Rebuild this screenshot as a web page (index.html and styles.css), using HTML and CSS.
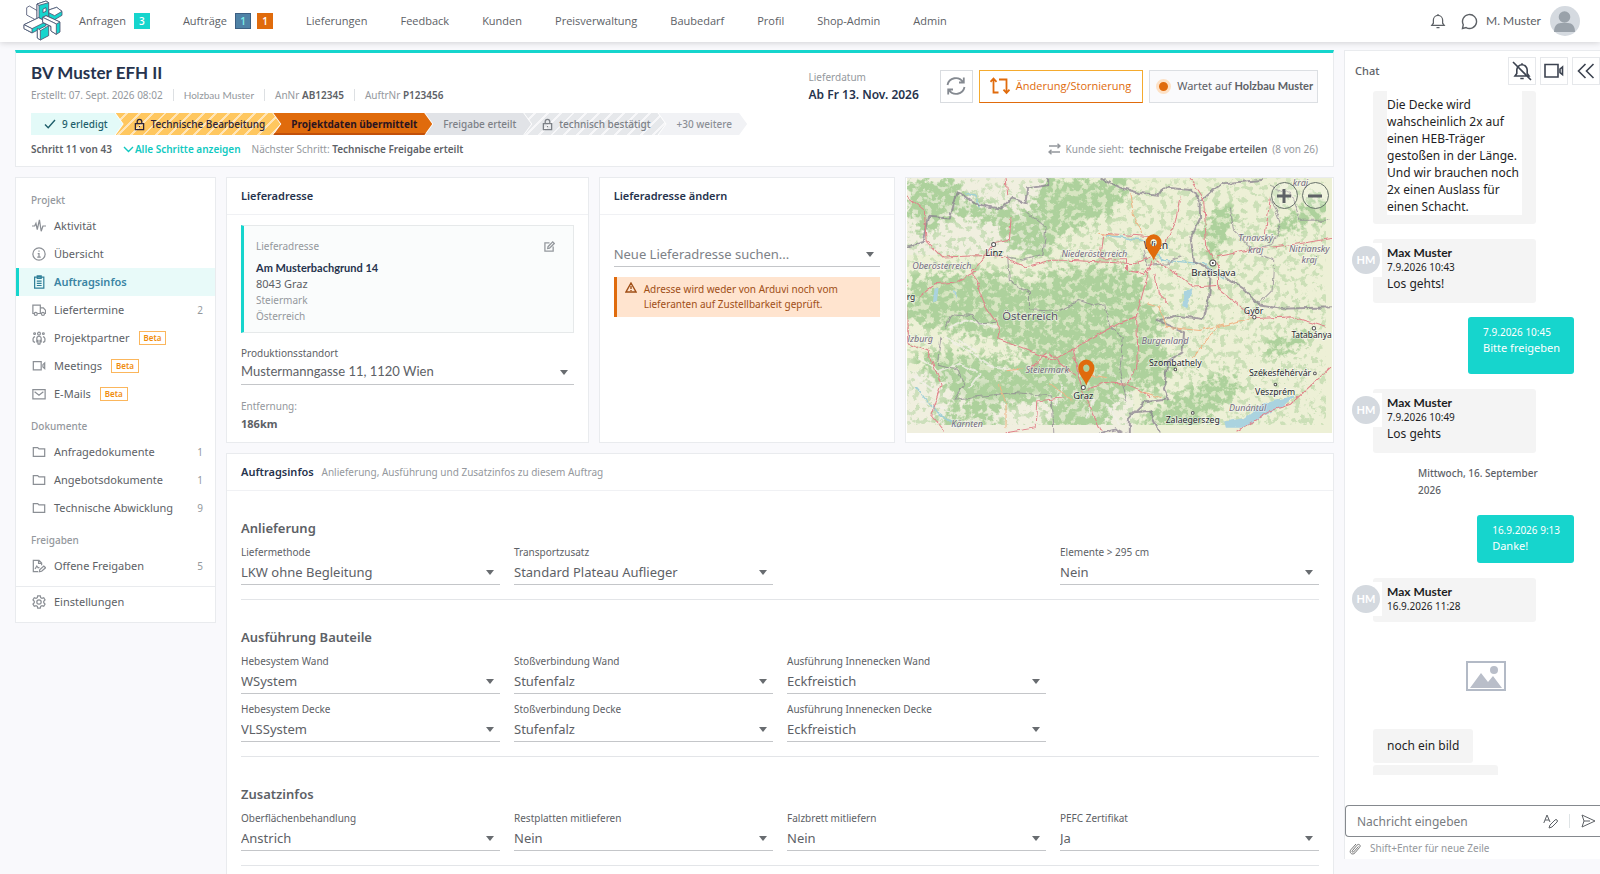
FILE: index.html
```html
<!DOCTYPE html>
<html lang="de">
<head>
<meta charset="utf-8">
<title>BV Muster EFH II</title>
<link rel="stylesheet" href="styles.css">
</head>
<body>
<svg class="defs" width="0" height="0" aria-hidden="true">
  <defs>
    <symbol id="i-folder" viewBox="0 0 16 16"><path d="M1.500 3.500V13h13V4.500H8L6.500 3h-5z"/></symbol>
    <symbol id="i-video" viewBox="0 0 16 16"><path d="M1.500 3h9v9.500h-9zM12.500 6.500l2-2v6.500l-2-2z"/></symbol>
    <symbol id="i-lock" viewBox="0 0 12 14"><path d="M1.500 6h9v6.500h-9zM3.500 6V3.800a2.500 2.500 0 0 1 5 0V6M6 8.500v1.500"/></symbol>
    <symbol id="i-bell" viewBox="0 0 18 18"><path d="M2 14h14l-1.800-2.500V8a5.200 5.200 0 0 0-10.400 0v3.500zM9 1.200v1.600M7.300 16.500h3.400"/></symbol>
  </defs>
</svg>

<header class="topbar">
  <a class="logo" href="#" aria-label="Startseite">
    <svg viewBox="0 0 138 126" width="46" height="42">
      <g stroke="#4d5672" stroke-width="2.500" stroke-linejoin="round" fill="#fff">
        <path d="M20 23l8-5 34 20v22l-7 4-35-19z"/>
        <path d="M86 30l24-8 16 12v12l-24 14-16-8z" fill="#16d5cd"/>
        <path d="M86 30l24-8 16 12-22 13-18-9z"/>
        <path d="M51 12l27-9 8 5v42l-24 12-11-8z" fill="#16d5cd"/>
        <path d="M51 12l6 4v46l-6-5z"/>
        <path d="M51 12l27-9 8 5-29 8z"/>
        <path d="M69 27l9-4v11l-9 4z"/>
        <path d="M12 74l44-21 22 12v12L36 99 12 86z" fill="#16d5cd"/>
        <path d="M12 74l44-21 22 12-42 21z"/>
        <path d="M12 74l24 12v12L12 86z"/>
        <path d="M52 88l8 5 26-16v30l-25 13-9-6z" fill="#16d5cd"/>
        <path d="M52 85l9 5v30l-9-6z"/>
        <path d="M68 52l10-5 42 19v30l-11 7-16-10V80l-25-13z" fill="#16d5cd"/>
        <path d="M68 52l10-5 42 19-11 6z"/>
        <path d="M68 52l41 20v31l-16-10V79L68 67z"/>
      </g>
    </svg>
  </a>
  <nav class="mainnav">
    <a href="#">Anfragen <b class="count teal">3</b></a>
    <a href="#">Aufträge <b class="count blue">1</b><b class="count orange">1</b></a>
    <a href="#">Lieferungen</a>
    <a href="#">Feedback</a>
    <a href="#">Kunden</a>
    <a href="#">Preisverwaltung</a>
    <a href="#">Baubedarf</a>
    <a href="#">Profil</a>
    <a href="#">Shop-Admin</a>
    <a href="#">Admin</a>
  </nav>
  <div class="user">
    <button class="plain" aria-label="Benachrichtigungen"><svg class="ico" width="16" height="16"><use href="#i-bell"/></svg></button>
    <button class="plain" aria-label="Nachrichten"><svg class="ico" width="17" height="17" viewBox="0 0 17 17"><path d="M1.500 15.500l.8-3.800a7 7 0 1 1 2.800 2.900z"/></svg></button>
    <span class="username">M. Muster</span>
    <svg width="30" height="30" viewBox="0 0 30 30"><circle cx="15" cy="15" r="15" fill="#d5dae0"/><circle cx="14.500" cy="11" r="5.800" fill="#9aa2aa"/><path d="M4 26c0-6 3-9 7-9h7c4 0 7 3 7 9z" fill="#9aa2aa"/></svg>
  </div>
</header>

<div class="page">
  <div class="left">
    <section class="project">
      <div class="project-top">
        <div>
          <h1>BV Muster EFH II</h1>
          <p class="meta"><span>Erstellt: 07. Sept. 2026 08:02</span><i></i><span class="lato">Holzbau Muster</span><i></i><span>AnNr <b>AB12345</b></span><i></i><span>AuftrNr <b>P123456</b></span></p>
        </div>
        <div class="actions">
          <div class="date"><span>Lieferdatum</span><strong>Ab Fr 13. Nov. 2026</strong></div>
          <button class="sq" aria-label="Neu laden"><svg class="ico" width="20" height="20" viewBox="0 0 20 20"><path d="M1.500 9A8.500 8.500 0 0 1 17 6M18.500 11A8.500 8.500 0 0 1 3 14M17.800 1.500V6.500H13M2.200 18.500V13.500H7"/></svg></button>
          <button class="change"><svg class="ico" width="20" height="18" viewBox="0 0 20 18"><path d="M8.500 15.500h-5V2M.5 4.800L3.500 1.500l3 3.300M9 2.500h7.500v13M13.500 12.700l3 3.300 3-3.300"/></svg>Änderung/Stornierung</button>
          <div class="waiting"><span class="dot"></span><span>Wartet auf <b class="lato">Holzbau Muster</b></span></div>
        </div>
      </div>
      <ol class="steps">
        <li class="s-done"><svg class="ico" width="12" height="10" viewBox="0 0 12 10"><path d="M1 5.500l3.200 3.200L11 1"/></svg>9 erledigt</li>
        <li class="s-tech"><svg class="ico" width="11" height="13"><use href="#i-lock"/></svg>Technische Bearbeitung</li>
        <li class="s-now">Projektdaten übermittelt</li>
        <li class="s-next">Freigabe erteilt</li>
        <li class="s-lock"><svg class="ico" width="11" height="13"><use href="#i-lock"/></svg>technisch bestätigt</li>
        <li class="s-more">+30 weitere</li>
      </ol>
      <div class="stepinfo">
        <b>Schritt 11 von 43</b>
        <a href="#"><svg class="ico" width="11" height="7" viewBox="0 0 11 7"><path d="M1 1l4.500 4.500L10 1"/></svg>Alle Schritte anzeigen</a>
        <span>Nächster Schritt: <b>Technische Freigabe erteilt</b></span>
        <span class="sees"><svg class="ico" width="13" height="12" viewBox="0 0 13 12"><path d="M1 3h11M9.500 .7L12 3 9.500 5.300M12 9H1M3.500 6.700L1 9l2.500 2.300"/></svg>Kunde sieht: <b>technische Freigabe erteilen</b> (8 von 26)</span>
      </div>
    </section>

    <div class="columns">
      <nav class="side">
        <h2>Projekt</h2>
        <a href="#"><svg class="ico" width="14" height="14" viewBox="0 0 16 16"><path d="M0 8h3l1.500-3L6 12l2.500-11L10.500 14l2-6H16"/></svg>Aktivität</a>
        <a href="#"><svg class="ico" width="14" height="14" viewBox="0 0 16 16"><circle cx="8" cy="8" r="7"/><path d="M8 4v1.500M6.500 7.500H8V11.500M6 11.500h4"/></svg>Übersicht</a>
        <a href="#" class="active"><svg class="ico" width="14" height="14" viewBox="0 0 16 16"><path d="M3 2.500h10.500v12.500H3zM6 1h4.500v3H6zM5.500 7h5.500M5.500 9.500h5.500M5.500 12h5.500"/></svg>Auftragsinfos</a>
        <a href="#"><svg class="ico" width="14" height="14" viewBox="0 0 16 16"><path d="M2.500 12H1V2.500h8.500V12H6M9.500 5.500h3.500l2.500 3V12h-1M9.500 12h1"/><circle cx="4.300" cy="12.500" r="1.700"/><circle cx="12.500" cy="12.500" r="1.700"/></svg>Liefertermine<span class="num">2</span></a>
        <a href="#"><svg class="ico" width="14" height="14" viewBox="0 0 16 16"><circle cx="8" cy="3" r="1.600"/><circle cx="3" cy="3" r="1"/><circle cx="13" cy="3" r="1"/><path d="M5.500 13V8.500a2.500 2.500 0 0 1 5 0V13M6.800 15V10M9.200 15V10M6.500 15h3M3.500 6.500C1 7 .8 9.500 1.500 12l2 1M12.500 6.500c2.500.5 2.700 3 2 5.500l-2 1"/></svg>Projektpartner<em>Beta</em></a>
        <a href="#"><svg class="ico" width="14" height="14"><use href="#i-video"/></svg>Meetings<em>Beta</em></a>
        <a href="#"><svg class="ico" width="14" height="14" viewBox="0 0 16 16"><path d="M1 3h14v10.500H1zM3 5.500l5 4 5-4"/></svg>E-Mails<em>Beta</em></a>
        <h2>Dokumente</h2>
        <a href="#"><svg class="ico" width="14" height="14"><use href="#i-folder"/></svg>Anfragedokumente<span class="num">1</span></a>
        <a href="#"><svg class="ico" width="14" height="14"><use href="#i-folder"/></svg>Angebotsdokumente<span class="num">1</span></a>
        <a href="#"><svg class="ico" width="14" height="14"><use href="#i-folder"/></svg>Technische Abwicklung<span class="num">9</span></a>
        <h2>Freigaben</h2>
        <a href="#"><svg class="ico" width="14" height="14" viewBox="0 0 16 16"><path d="M7 14.500H1.500v-13H8l3 3V7M7.500 1.500V5H11M3.500 11.500l2-3.500 1.500 2 1.500-.5M8.500 14.500l.5-2.500 4.500-4 2 2-4.500 4z"/></svg>Offene Freigaben<span class="num">5</span></a>
        <hr>
        <a href="#"><svg class="ico" width="14" height="14" viewBox="0 0 16 16"><circle cx="8" cy="8" r="2.500"/><path d="M6.500 1h3l.4 2 1.500.9 2-.8 1.500 2.600-1.500 1.400v1.800l1.500 1.400-1.500 2.600-2-.8-1.500.9-.4 2h-3l-.4-2-1.500-.9-2 .8L1.100 10.300l1.500-1.400V7.100L1.100 5.700l1.500-2.600 2 .8 1.500-.9z"/></svg>Einstellungen</a>
      </nav>

      <main class="content">
        <div class="cards">
          <section class="card">
            <h2 class="cardhead">Lieferadresse</h2>
            <div class="cardbody">
              <div class="address">
                <div class="addrhead">Lieferadresse<button class="plain" aria-label="Bearbeiten"><svg class="ico" width="11" height="11" viewBox="0 0 12 12"><path d="M6 2H1v9h9V6M4 8.200l.4-2L9.500 1l1.700 1.700L6 7.800z"/></svg></button></div>
                <strong class="lato">Am Musterbachgrund 14</strong>
                <span class="dark">8043 Graz</span>
                <span>Steiermark</span>
                <span>Österreich</span>
              </div>
              <div class="field site">
                <label for="site">Produktionsstandort</label>
                <div class="sel"><select id="site" class="lato"><option>Mustermanngasse 11, 1120 Wien</option></select></div>
              </div>
              <dl class="distance"><dt>Entfernung:</dt><dd>186km</dd></dl>
            </div>
          </section>
          <section class="card">
            <h2 class="cardhead">Lieferadresse ändern</h2>
            <div class="cardbody search">
              <div class="sel"><input type="text" placeholder="Neue Lieferadresse suchen..." aria-label="Neue Lieferadresse suchen"></div>
              <div class="alert"><svg class="ico" width="12" height="11" viewBox="0 0 12 11"><path d="M6 1l5 9H1zM6 4v3M6 8v1"/></svg><p>Adresse wird weder von Arduvi noch vom Lieferanten auf Zustellbarkeit geprüft.</p></div>
            </div>
          </section>
          <section class="card mapcard">
            <div class="map">
              <svg viewBox="21 24 1275 762" preserveAspectRatio="xMidYMid slice">
                <defs>
                  <filter id="woods" x="0" y="0" width="100%" height="100%" filterUnits="userSpaceOnUse" color-interpolation-filters="sRGB">
                    <feTurbulence type="fractalNoise" baseFrequency=".05" numOctaves="5" seed="8" result="n"/>
                    <feColorMatrix in="n" type="matrix" values="0 0 0 0 0  0 0 0 0 0  0 0 0 0 0  4 0 0 0 -1.500" result="a"/>
                    <feGaussianBlur in="SourceGraphic" stdDeviation="14" result="b"/>
                    <feComposite in="b" in2="a" operator="arithmetic" k2="1.800" k3="1" k4="-.95" result="c"/>
                    <feColorMatrix in="c" type="matrix" values="0 0 0 0 .68  0 0 0 0 .82  0 0 0 0 .61  0 0 0 1.300 0"/>
                  </filter>
                  <filter id="rough" x="-5%" y="-5%" width="110%" height="110%"><feTurbulence type="fractalNoise" baseFrequency=".04" numOctaves="3" seed="3"/><feDisplacementMap in="SourceGraphic" scale="14" xChannelSelector="R" yChannelSelector="G"/></filter>
                </defs>
                <rect x="21" y="24" width="1275" height="762" fill="#edf0d6"/>
                <path d="M21 24h420v230H21zM21 600h680v186H21z" fill="#f1eee4" opacity=".6"/>
                <g filter="url(#woods)">
                  <rect x="21" y="24" width="1275" height="762" fill="#000" fill-opacity=".2"/>
                  <path d="M21 24h150l30 70 180 30 60-100h250l-40 100-150 60-60 80-90-20-60-80-130-30-90 60-50-60zM21 320l220-20 130 30 200-50 130 20 50 60-30 70-130 70-60 90-120-20-100-60-130-20-160-40zM540 500l160-40 130 110-50 90-120 10-50 116H440L460 660 340 700 180 690 40 560 180 540 320 570 460 560zM900 180l60-80 50 20-70 170zM640 450l80-50 70 30-20 90zM1100 180l190-120v80l-160 50zM1090 520l140-50-30 60-90 30zM700 780l80-80 200-100 50 40-150 140z" fill="#000" fill-opacity=".6"/>
                  <path d="M120 700h180v86H120zM200 640h260v50H220z" fill="#000" fill-opacity=".5"/>
                </g>
                <g filter="url(#rough)" fill="none" stroke-linecap="round">
                  <g stroke="#f3f0e8" stroke-width="6" opacity=".8"><path d="M140 500l80 50 60 40 70 10M60 560l60 40 60-20 50 20M50 620l70 50M60 690l90 30M180 510l50 30M240 610l-30 40M290 470l-90-20-50 20M470 700l20-60M560 740l20-50M620 700l40 60"/></g>
                  <g fill="#aad3df"><path d="M855 365l22-12-5 35-12 28-14-8zM972 752l60-10 60-45 95-25-40 35-70 35-50 28h-50zM106 355l12-4-4 40-12 5zM165 362h7l-2 24z"/></g>
                  <path d="M200 70l30 5 10 35M50 650l60 70 70 50M620 195l110 15 60 60 120 10 60 45" stroke="#9fcfd6" stroke-width="4"/>
                  <g stroke="#857b8b" stroke-width="6" opacity=".7"><path d="M21 230l50-15 15-75 65 5 25-80 50 35 40 10 40 5 30-30 45 15 5-45 60-10V24M605 24l60 30 55 15 55 5 15-22 80 8 28 25 2 60-28 60 10 70 50 25-5 80-20 65-80-10-50 15 75 35-5 60-45 30-10 80 15 30-75 10-45 45v55l-40-20-50 15M690 725l60-5 30 66M905 90l60-50 60-5 60-5M960 310l70 45 50 50 60 10 160-5"/></g>
                  <g stroke="#8d8392" stroke-width="3" opacity=".7"><path d="M380 125l60 45-10 85-60 15-45-10 5 70 60 40v45l90 5 60-30 45 15 30-5 15 70 40 30-10 100 20 90M140 470l20-40 60 5 20 25 50-5M125 500l-10 80 60 15 20 50-30 40 180-20 110 10 5 116M730 240l10 45 60-5 40-20M990 110l10 70 60 60 60-20 20-60-30-80M1070 250l50 20-5 90-40 40M1110 50l60 20 30 80 90 0"/></g>
                  <g stroke="#e2828a" stroke-width="3"><path d="M21 75l55 45 5 90 50 50 150-5 45 10 50 25 80-20h50l100 5 100 5 45-20M320 24l5 50M335 145l-5 65-45 10-45 60-20 20 20 60 20 50 40 60-5 35 170 65 60-40 110-60 75-35 25-90 10-40 10-30M440 550l-50 45M450 550l75 60M520 530l15 80 10 40 60 130M565 655l50-20 65 5 35 15 40 25M500 680l-85 10-5 80-90 15M620 190l150 10M610 190l-10 75 80 0 0 35 50 10 30-30M760 265l70 45 50 40 70-5M840 80l-15 80-30 60M870 24l40 60 10 150 35 55 0 65 110 90 110-5 100 30M950 260l90-20 160-20 90-15M1110 80l-15 110M710 430l5 150-35 60M765 310l10 60 30 30M21 340l5 180 60 20 40 100-30 90 40 50M60 380l50-40 60-5 60-30M1010 780l100-60 60-20 120-110"/></g>
                  <g stroke="#f0b486" stroke-width="3"><path d="M690 70l10 60 25 60M600 190l50 5M740 400l40 10 20 60 100 10 70-20M1060 440l-110 30-70 90M320 600l50-5M300 640l20 60 0 70M620 620l-70-10M720 660l60 20M450 640l70 50"/></g>
                </g>
                <g fill="#fff" stroke="#555" stroke-width="3"><circle cx="283" cy="223" r="6"/><circle cx="938" cy="278" r="9"/><circle cx="1062" cy="440" r="5"/><circle cx="1240" cy="473" r="5"/><circle cx="826" cy="596" r="4"/><circle cx="1125" cy="641" r="4"/><circle cx="1243" cy="608" r="4"/><circle cx="878" cy="726" r="4"/><circle cx="551" cy="650" r="6"/></g>
                <circle cx="938" cy="278" r="3" fill="#333"/>
                <g class="places" text-anchor="middle">
                  <text x="284" y="256" font-size="28">Linz</text>
                  <text x="768" y="237" font-size="31">Wien</text>
                  <text x="940" y="318" font-size="29">Bratislava</text>
                  <text x="1060" y="429" font-size="26">Győr</text>
                  <text x="1233" y="503" font-size="25">Tatabánya</text>
                  <text x="826" y="585" font-size="26">Szombathely</text>
                  <text x="1139" y="617" font-size="26">Székesfehérvár</text>
                  <text x="1124" y="671" font-size="26">Veszprém</text>
                  <text x="878" y="757" font-size="26">Zalaegerszeg</text>
                  <text x="551" y="684" font-size="28">Graz</text>
                  <text x="36" y="390" font-size="25">rg</text>
                  <text x="392" y="449" font-size="34" class="land">Österreich</text>
                </g>
                <g class="regions" text-anchor="middle" font-size="27">
                  <text x="584" y="260">Niederösterreich</text><text x="128" y="297">Oberösterreich</text><text x="1066" y="213">Trnavský</text><text x="1066" y="247">kraj</text><text x="1226" y="244">Nitriansky</text><text x="1226" y="278">kraj</text><text x="1200" y="47">kraj</text><text x="795" y="519">Burgenland</text><text x="443" y="606">Steiermark</text><text x="64" y="514">lzburg</text><text x="204" y="767">Kärnten</text><text x="1042" y="719">Dunántúl</text>
                </g>
                <g fill="#e06b0c" fill-rule="evenodd"><path d="M761 270c-7-20-24-32-24-52a24 26 0 0 1 48 0c0 20-17 32-24 52zM761 206a9.500 11 0 1 0 .1 0z"/><path d="M560 644c-7-20-24-32-24-52a24 26 0 0 1 48 0c0 20-17 32-24 52zM560 581a9.500 11 0 1 0 .1 0z"/></g>
              </svg>
              <div class="zoom"><button aria-label="Vergrößern"><svg class="ico" width="14" height="14" viewBox="0 0 14 14"><path d="M7 0v14M0 7h14"/></svg></button><button aria-label="Verkleinern"><svg class="ico" width="14" height="14" viewBox="0 0 14 14"><path d="M0 7h14"/></svg></button></div>
            </div>
          </section>
        </div>

        <section class="card details">
          <h2 class="cardhead">Auftragsinfos <span>Anlieferung, Ausführung und Zusatzinfos zu diesem Auftrag</span></h2>
          <form class="form">
            <fieldset>
              <legend>Anlieferung</legend>
              <div class="grid">
                <div class="field"><label for="f1">Liefermethode</label><div class="sel"><select id="f1"><option>LKW ohne Begleitung</option></select></div></div>
                <div class="field"><label for="f2">Transportzusatz</label><div class="sel"><select id="f2"><option>Standard Plateau Auflieger</option></select></div></div>
                <div class="field last"><label for="f3">Elemente &gt; 295 cm</label><div class="sel"><select id="f3"><option>Nein</option></select></div></div>
              </div>
            </fieldset>
            <fieldset>
              <legend>Ausführung Bauteile</legend>
              <div class="grid">
                <div class="field"><label for="f4">Hebesystem Wand</label><div class="sel"><select id="f4"><option>WSystem</option></select></div></div>
                <div class="field"><label for="f5">Stoßverbindung Wand</label><div class="sel"><select id="f5"><option>Stufenfalz</option></select></div></div>
                <div class="field"><label for="f6">Ausführung Innenecken Wand</label><div class="sel"><select id="f6"><option>Eckfreistich</option></select></div></div>
                <div class="field newrow"><label for="f7">Hebesystem Decke</label><div class="sel"><select id="f7"><option>VLSSystem</option></select></div></div>
                <div class="field"><label for="f8">Stoßverbindung Decke</label><div class="sel"><select id="f8"><option>Stufenfalz</option></select></div></div>
                <div class="field"><label for="f9">Ausführung Innenecken Decke</label><div class="sel"><select id="f9"><option>Eckfreistich</option></select></div></div>
              </div>
            </fieldset>
            <fieldset>
              <legend>Zusatzinfos</legend>
              <div class="grid">
                <div class="field"><label for="f10">Oberflächenbehandlung</label><div class="sel"><select id="f10"><option>Anstrich</option></select></div></div>
                <div class="field"><label for="f11">Restplatten mitlieferen</label><div class="sel"><select id="f11"><option>Nein</option></select></div></div>
                <div class="field"><label for="f12">Falzbrett mitliefern</label><div class="sel"><select id="f12"><option>Nein</option></select></div></div>
                <div class="field"><label for="f13">PEFC Zertifikat</label><div class="sel"><select id="f13"><option>Ja</option></select></div></div>
              </div>
            </fieldset>
          </form>
        </section>
      </main>
    </div>
  </div>

  <aside class="chat">
    <div class="chathead">
      <h2>Chat</h2>
      <button aria-label="Stummschalten"><svg class="ico" width="20" height="20" viewBox="-1 -1 20 20"><path d="M2 14h14l-1.800-2.500V8a5.200 5.200 0 0 0-10.400 0v3.500zM9 1.200v1.600M7.300 16.500h3.400M0 0l18 18"/></svg></button>
      <button aria-label="Videoanruf"><svg class="ico" width="20" height="16" viewBox="0 0 20 16"><path d="M1 1.500h13v12.500H1z"/><path d="M16 6l2.500-2v7.500L16 9.500z"/></svg></button>
      <button aria-label="Einklappen"><svg class="ico" width="18" height="16" viewBox="0 0 18 16"><path d="M8.500 1L1.500 8l7 7M16.500 1l-7 7 7 7"/></svg></button>
    </div>
    <div class="messages">
      <div class="bubble cut"><p>Die Decke wird wahscheinlich 2x auf einen HEB-Träger gestoßen in der Länge. Und wir brauchen noch 2x einen Auslass für einen Schacht.</p></div>
      <div class="row"><div class="who"><span>HM</span></div><div class="bubble"><b>Max Muster</b><time>7.9.2026 10:43</time><p>Los gehts!</p></div></div>
      <div class="bubble own tall"><time>7.9.2026 10:45</time><p>Bitte freigeben</p></div>
      <div class="row"><div class="who"><span>HM</span></div><div class="bubble"><b>Max Muster</b><time>7.9.2026 10:49</time><p>Los gehts</p></div></div>
      <div class="day">Mittwoch, 16. September 2026</div>
      <div class="bubble own"><time>16.9.2026 9:13</time><p>Danke!</p></div>
      <div class="row"><div class="who"><span>HM</span></div><div class="bubble short"><b>Max Muster</b><time>16.9.2026 11:28</time></div></div>
      <div class="photo"><svg width="40" height="30" viewBox="0 0 40 30"><rect x="1" y="1" width="38" height="28" fill="#fff" stroke="#b3bac6" stroke-width="2"/><path d="M4 27l11-15 7 9 5-6 9 12z" fill="#b9bec9"/><circle cx="28" cy="9" r="4" fill="#b9bec9"/></svg></div>
      <div class="bubble fit"><p>noch ein bild</p></div>
      <div class="bubble stub"></div>
    </div>
    <div class="compose">
      <input type="text" placeholder="Nachricht eingeben" aria-label="Nachricht eingeben">
      <button class="plain" aria-label="Formatieren"><svg class="ico" width="15" height="15" viewBox="0 0 15 15"><path d="M.8 9L4 1l3 7M2 6h4M6 14l1-3 5-5a1.400 1.400 0 0 1 2 2l-5 5z"/></svg></button>
      <button class="plain send" aria-label="Senden"><svg class="ico" width="15" height="14" viewBox="0 0 15 14"><path d="M1 1l13 6L1 13l2-6zM3 7h6"/></svg></button>
    </div>
    <div class="hint"><button class="plain" aria-label="Datei anhängen"><svg class="ico" width="12" height="13" viewBox="0 0 12 13"><path d="M9.500 4.500l-5 5.500c-.8.800-2-.2-1.200-1.200L8 3.200c1.800-2 4.300.2 2.600 2.200L6 10.800c-2.600 3-6.500-.3-4-3.200L7 2"/></svg></button>Shift+Enter für neue Zeile</div>
  </aside>
</div>
</body>
</html>
```
FILE: styles.css
```css
:root {
  --teal: #16d5cd;
  --orange: #e06b0c;
  --line: #e9ebee;
  --text: #5d6166;
  --muted: #94989d;
  --navy: #26334d;
}

* { box-sizing: border-box; }

body {
  margin: 0;
  height: 100vh;
  overflow: hidden;
  display: flex;
  flex-direction: column;
  background: #f9f9fc;
  color: var(--text);
  font: 11px/16px "Noto Sans", "Open Sans", sans-serif;
}

h1, h2, p, ol, dl, dd, fieldset { margin: 0; padding: 0; border: 0; }
a { color: inherit; text-decoration: none; }
b, strong { font-weight: 600; }
button, input, select { font: inherit; color: inherit; margin: 0; }
.defs { position: absolute; }
.lato { font-family: Lato, sans-serif; }
.ico { fill: none; stroke: currentColor; stroke-width: 1.4; flex: none; }
.plain { display: flex; padding: 0; border: 0; background: none; }

/* top bar */
.topbar {
  display: flex;
  align-items: center;
  flex: none;
  height: 42px;
  padding: 0 20px;
  background: #fff;
  box-shadow: 0 1px 6px rgba(0, 0, 0, .16);
}
.logo { display: flex; margin-right: 13px; }
.mainnav { display: flex; gap: 33px; font-family: "Open Sans", sans-serif; font-weight: 500; }
.mainnav a { display: flex; align-items: center; }
.count {
  width: 16px;
  height: 16px;
  margin-left: 6px;
  color: #fff;
  font-size: 10px;
  line-height: 16px;
  text-align: center;
}
.count:first-of-type { margin-left: 8px; }
.teal { background: var(--teal); }
.blue { background: #4f82a6; box-shadow: inset 0 0 0 1px #3c5f83; color: #7df0ea; }
.orange { background: var(--orange); }
.user { display: flex; align-items: center; gap: 15px; margin-left: auto; font-family: Lato, sans-serif; font-size: 12px; }
.user .username { margin: 0 -6px 0 -7px; }

/* page */
.page { display: flex; gap: 10px; flex: 1; min-height: 0; padding-left: 15px; }
.left { flex: 1; min-width: 0; padding-top: 8px; display: flex; flex-direction: column; gap: 10px; }

.project {
  flex: none;
  padding: 9px 15px 9px;
  border: 1px solid var(--line);
  border-top: 3px solid var(--teal);
  background: #fff;
}
.project-top { display: flex; justify-content: space-between; }
.project h1 { color: var(--navy); font: 700 17px/22px Lato, sans-serif; }
.meta { display: flex; align-items: center; height: 22px; color: var(--muted); font-size: 10px; }
.meta b { color: var(--text); }
.meta i { width: 1px; height: 12px; margin: 0 10px; background: #dde0e3; }
.actions { display: flex; align-items: center; gap: 6px; height: 48px; }
.date { display: flex; flex-direction: column; gap: 2px; margin-right: 15px; color: var(--muted); font-size: 10px; }
.date strong { color: var(--navy); font-size: 12px; }
.sq { display: flex; align-items: center; justify-content: center; width: 33px; height: 33px; padding: 0; border: 1px solid #d9dce0; background: #fff; color: #858a91; }
.sq .ico, .change .ico { stroke-width: 1.8; }
.change { display: flex; align-items: center; gap: 6px; height: 33px; padding: 0 11px 0 10px; border: 1px solid #f5ab2e; border-bottom-color: var(--orange); background: #fff; color: var(--orange); font-family: "Open Sans", sans-serif; }
.waiting { display: flex; align-items: center; gap: 6px; height: 33px; padding: 0 4px 0 6px; border: 1px solid #dcdfe3; background: #fafafc; }
.waiting b { font-weight: 700; }
.dot { width: 15px; height: 15px; border: 3px solid #fde1c6; border-radius: 50%; background: var(--orange); }

.steps { display: flex; margin-top: 3px; list-style: none; font-size: 10px; font-weight: 500; }
.steps li {
  display: flex;
  align-items: center;
  gap: 6px;
  height: 22px;
  margin-left: -7px;
  padding: 0 15px 0 18px;
  clip-path: polygon(0 0, calc(100% - 8px) 0, 100% 50%, calc(100% - 8px) 100%, 0 100%, 8px 50%);
}
.steps .s-done { margin-left: 0; padding-left: 13px; background: #e3faf8; color: #1f5f6b; clip-path: polygon(0 0, calc(100% - 8px) 0, 100% 50%, calc(100% - 8px) 100%, 0 100%); }
.s-tech { background: repeating-linear-gradient(135deg, #ffc75f 0 7px, #ffe5b8 7px 9px); color: #2c2438; }
.steps .s-now { background: var(--orange); box-shadow: inset 0 -2px #c2500a; color: #2a1420; font-weight: 700; }
.s-next { background: #e1e3e7; color: #7c8086; }
.s-lock { background: repeating-linear-gradient(135deg, #e6e8eb 0 7px, #f7f7f9 7px 9px); color: #7c8086; }
.s-more { background: #f1f2f5; color: #8b8f95; }

.stepinfo { display: flex; align-items: center; gap: 11px; margin-top: 6px; color: var(--muted); font-size: 10px; }
.stepinfo b { color: var(--text); }
.stepinfo a { display: flex; align-items: center; gap: 1px; color: #10c9c1; font-weight: 600; }
.sees { display: flex; align-items: center; gap: 5px; margin-left: auto; }

/* sidebar */
.columns { display: flex; align-items: flex-start; gap: 10px; flex: 1; min-height: 0; }
.side { flex: none; width: 201px; padding: 13px 0 6px; border: 1px solid var(--line); background: #fff; }
.side h2 { padding: 0 15px; color: var(--muted); font-size: 10px; font-weight: 500; line-height: 18px; margin-bottom: 3px; }
.side a + h2 { margin-top: 9px; }
.side a { display: flex; align-items: center; gap: 8px; height: 28px; padding: 0 12px 0 16px; }
.side .ico { color: #8b8f95; }
.side .active { padding-left: 13px; border-left: 3px solid var(--teal); background: #e8faf9; color: #3a84a3; font-weight: 600; }
.side .active .ico { color: #2f7f98; }
.side em { margin-left: 1px; padding: 0 4px; border: 1px solid #fbb65c; color: #f08c0c; font-size: 8px; font-style: normal; font-weight: 600; line-height: 12px; }
.side .num { margin-left: auto; color: var(--muted); font-size: 10px; }
.side hr { margin: 6px 0 1px; border: 0; border-top: 1px solid var(--line); }

/* cards */
.content { flex: 1; min-width: 0; display: flex; flex-direction: column; gap: 10px; }
.cards { display: grid; grid-template-columns: 363fr 297fr 429fr; gap: 10px; }
.card { border: 1px solid var(--line); background: #fff; }
.cardhead { height: 37px; padding: 0 14px; border-bottom: 1px solid #f0f1f4; color: var(--navy); font-size: 11px; font-weight: 600; line-height: 36px; }
.cardhead span { margin-left: 5px; color: var(--muted); font-size: 10px; font-weight: 400; }
.cardbody { padding: 10px 14px 8px; }
.address { display: flex; flex-direction: column; padding: 12px 18px 8px 12px; border: 1px solid #e6e9ea; border-left: 3px solid var(--teal); background: #fafcfc; color: var(--muted); font-size: 10px; }
.addrhead { display: flex; justify-content: space-between; align-items: center; margin-bottom: 6px; }
.address strong { color: var(--navy); font-size: 11px; font-weight: 700; }
.address .dark { color: var(--text); font-size: 11px; }

.field label { display: block; font-size: 10px; line-height: 16px; }
.sel { position: relative; border-bottom: 1px solid #c4c6c9; }
.sel::after { content: ""; position: absolute; right: 6px; top: 50%; margin-top: -2px; border: 4px solid transparent; border-top: 5px solid #686c70; border-bottom: 0; pointer-events: none; }
.sel select, .sel input { display: block; width: 100%; height: 24px; padding: 0; border: 0; outline: 0; border-radius: 0; appearance: none; background: none; font-size: 13px; }
.sel input::placeholder { color: #7d8287; opacity: 1; }
.site { margin-top: 13px; }
.site label { line-height: 14px; }
.site .sel select { font-family: Lato, sans-serif; font-size: 13px; padding-bottom: 2px; }
.distance { margin-top: 12px; padding-bottom: 1px; color: var(--muted); font-size: 10px; line-height: 18px; }
.distance dd { color: var(--text); font-size: 11px; font-weight: 700; }

.search { padding-top: 27px; }
.alert { display: flex; gap: 7px; margin-top: 10px; padding: 5px 8px; border-left: 3px solid var(--orange); background: #ffe4cf; color: #a04f17; font-size: 10px; line-height: 15px; }

.mapcard { padding: 0 1px 9px; display: flex; }
.map { position: relative; flex: 1; overflow: hidden; }
.map > svg { position: absolute; width: 100%; height: 100%; }
.places { fill: #26262e; font-family: "Noto Sans", sans-serif; paint-order: stroke; stroke: #fff; stroke-opacity: .6; stroke-width: 4px; }
.places .land { fill: #5b5366; }
.regions { fill: #746a7e; font-family: "Noto Sans", sans-serif; font-style: italic; paint-order: stroke; stroke: #fff; stroke-opacity: .5; stroke-width: 4px; }
.zoom { position: absolute; top: 4px; right: 3px; display: flex; gap: 4px; }
.zoom button { display: flex; align-items: center; justify-content: center; width: 27px; height: 27px; padding: 0; border: 1px solid #66706a; border-radius: 50%; background: rgba(255, 255, 255, .2); color: #5f6266; }
.zoom .ico { stroke-width: 3; }

/* form */
.form { padding: 0 14px 40px; }
.form fieldset { padding-bottom: 14px; border-bottom: 1px solid #e3e5e8; }
.form legend { padding: 27px 0 6px; font-size: 13px; font-weight: 600; line-height: 20px; }
.grid { display: grid; grid-template-columns: repeat(4, 1fr); column-gap: 14px; row-gap: 7px; }
.grid .last { grid-column: 4; }
.grid .newrow { grid-column: 1; }

/* chat */
.chat { flex: none; width: 256px; height: 809px; margin-top: 8px; border: 1px solid var(--line); border-width: 1px 0 0 1px; background: #fff; display: flex; flex-direction: column; }
.chathead { display: flex; align-items: center; gap: 4px; height: 40px; flex: none; padding-left: 10px; }
.chathead h2 { flex: 1; font-size: 11px; font-weight: 500; }
.chathead button { display: flex; align-items: center; justify-content: center; width: 28px; height: 28px; padding: 0; border: 1px solid #e6e8eb; background: #fff; color: #3c4350; }
.chathead .ico { stroke-width: 1.6; }
.messages { flex: 1; min-height: 0; overflow: hidden; padding-left: 7px; display: flex; flex-direction: column; align-items: flex-start; color: #1e1e24; }
.bubble { width: 163px; margin-left: 21px; padding: 6px 14px; border-radius: 3px; background: #f4f4f4; font-size: 11px; line-height: 15px; flex: none; }
.bubble p { font-size: 12px; line-height: 17px; }
.bubble b, .bubble time { display: block; }
.bubble b { font: 700 12px/15px Lato, sans-serif; }
.bubble time { font-size: 10px; }
.row .bubble { height: 64px; }
.row .bubble.short { height: 44px; }
.bubble.cut { padding: 0 14px 9px; }
.bubble.cut p { padding: 5px 0 0; background: #fff; }
.row { position: relative; margin-top: 15px; }
.who { position: absolute; left: 0; top: 4px; width: 30px; height: 34px; padding-top: 3px; background: #fff; }
.who span { display: block; width: 28px; height: 28px; border-radius: 50%; background: #d4d9df; color: #fff; font: 700 11px/28px Lato, sans-serif; text-align: center; }
.bubble.own { width: auto; align-self: flex-end; margin: 25px 26px 0 0; padding: 8px 14px 7px 15px; background: var(--teal); color: #fff; }
.bubble.own p { font-size: 11px; line-height: 16px; }
.bubble.own.tall { margin-top: 14px; padding-bottom: 18px; }
.day { width: 130px; margin: 12px 0 0 66px; color: var(--text); font-size: 10px; font-weight: 500; line-height: 17px; }
.day + .bubble.own { margin-top: 16px; padding-bottom: 9px; }
.photo { align-self: flex-end; display: flex; align-items: center; justify-content: center; width: 197px; height: 97px; margin: 5px 16px 5px 0; flex: none; }
.bubble.fit { width: auto; padding: 8px 14px 9px; }
.bubble.stub { width: 125px; height: 10px; margin-top: 2px; padding: 0; border-radius: 3px 3px 0 0; }
.compose { display: flex; align-items: center; flex: none; height: 32px; margin-top: 30px; padding-right: 4px; border: 1px solid #85898e; border-right: 0; border-radius: 4px 0 0 4px; }
.compose input { flex: 1; min-width: 0; height: 28px; padding: 0 11px; border: 0; outline: 0; background: none; font-size: 12px; }
.compose input::placeholder { color: #777b80; opacity: 1; }
.compose .ico { stroke-width: 1; }
.send { margin-left: 11px; padding-left: 11px; border-left: 1px solid #dfe4e6; }
.hint { display: flex; align-items: center; gap: 9px; flex: none; height: 22px; padding-left: 4px; color: var(--muted); font-size: 10px; }
.hint .ico { stroke-width: 1; color: #777; }
```
